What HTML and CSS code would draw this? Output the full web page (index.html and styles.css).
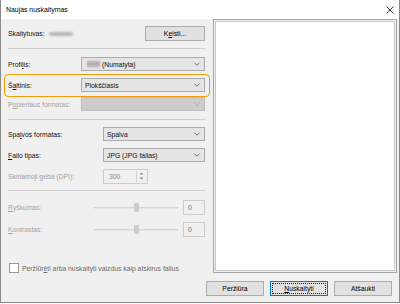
FILE: index.html
```
<!DOCTYPE html>
<html lang="lt">
<head>
<meta charset="utf-8">
<link rel="stylesheet" href="styles.css">
</head>
<body>
<div class="window">
  <div class="titlebar">
    <span class="title">Naujas nuskaitymas</span>
    <svg class="close" width="8" height="8" viewBox="0 0 8 8"><path d="M0.5 0.5 L7.5 7.5 M7.5 0.5 L0.5 7.5" stroke="#222" stroke-width="0.9" fill="none"/></svg>
  </div>
  <div class="main">
    <div class="left">
      <div class="row r-scanner">
        <span class="label">Skaitytuvas:</span>
        <span class="blur-name"></span>
        <button class="btn btn-change">K<u>e</u>isti...</button>
      </div>
      <div class="sep s1"></div>
      <div class="row r-profile">
        <span class="label">Profi<u>l</u>is:</span>
        <div class="select wide"><span class="blur-icon"></span><span>(Numatyta)</span><svg class="chev" width="6" height="4" viewBox="0 0 6 4"><path d="M0.5 0.8 L3 3.2 L5.5 0.8" stroke="#555" stroke-width="0.8" fill="none"/></svg></div>
      </div>
      <div class="row r-source">
        <div class="highlight"></div>
        <span class="label">Š<u>a</u>ltinis:</span>
        <div class="select wide"><span>Plokščiasis</span><svg class="chev" width="6" height="4" viewBox="0 0 6 4"><path d="M0.5 0.8 L3 3.2 L5.5 0.8" stroke="#555" stroke-width="0.8" fill="none"/></svg></div>
      </div>
      <div class="row r-paper">
        <span class="label disabled">P<u>o</u>pieriaus formatas:</span>
        <div class="select wide off"><span></span><svg class="chev" width="6" height="4" viewBox="0 0 6 4"><path d="M0.5 0.8 L3 3.2 L5.5 0.8" stroke="#aaa" stroke-width="0.8" fill="none"/></svg></div>
      </div>
      <div class="sep s2"></div>
      <div class="row r-color">
        <span class="label">Spa<u>l</u>vos formatas:</span>
        <div class="select narrow"><span>Spalva</span><svg class="chev" width="6" height="4" viewBox="0 0 6 4"><path d="M0.5 0.8 L3 3.2 L5.5 0.8" stroke="#555" stroke-width="0.8" fill="none"/></svg></div>
      </div>
      <div class="row r-type">
        <span class="label"><u>F</u>ailo tipas:</span>
        <div class="select narrow"><span>JPG (JPG failas)</span><svg class="chev" width="6" height="4" viewBox="0 0 6 4"><path d="M0.5 0.8 L3 3.2 L5.5 0.8" stroke="#555" stroke-width="0.8" fill="none"/></svg></div>
      </div>
      <div class="row r-dpi">
        <span class="label disabled">Skiriamoji geba (DPI):</span>
        <div class="spin">
          <div class="spin-field">300</div>
          <div class="spin-btns">
            <svg width="5" height="3" viewBox="0 0 5 3"><path d="M0.5 2.5 L2.5 0.5 L4.5 2.5 Z" fill="#888"/></svg>
            <svg width="5" height="3" viewBox="0 0 5 3"><path d="M0.5 0.5 L2.5 2.5 L4.5 0.5 Z" fill="#888"/></svg>
          </div>
        </div>
      </div>
      <div class="sep s3"></div>
      <div class="row r-bright">
        <span class="label disabled"><u>R</u>yškumas:</span>
        <div class="slider"><div class="track"></div><div class="thumb"></div></div>
        <div class="valbox">0</div>
      </div>
      <div class="row r-contrast">
        <span class="label disabled"><u>K</u>ontrastas:</span>
        <div class="slider"><div class="track"></div><div class="thumb"></div></div>
        <div class="valbox">0</div>
      </div>
      <div class="row r-check">
        <span class="checkbox"></span>
        <span class="check-label">Peržiūr<u>ė</u>ti arba nuskaityti vaizdus kaip atskirus failus</span>
      </div>
    </div>
    <div class="preview"><div class="preview-inner"></div></div>
  </div>
  <div class="footer">
    <button class="btn">Peržiūra</button>
    <button class="btn btn-default"><span class="focus"><u>N</u>uskaityti</span></button>
    <button class="btn">Atšaukti</button>
  </div>
</div>
</body>
</html>
```

FILE: styles.css
```
* { box-sizing: border-box; }
html, body { margin: 0; padding: 0; background: #ffffff; }
body {
  font-family: "Liberation Sans", Arial, sans-serif;
  font-size: 6.8px;
  color: #111;
}
u { text-decoration-thickness: 0.6px; text-underline-offset: 1px; }
.window {
  width: 400px;
  height: 303px;
  background: #f0f0f0;
  border: 1px solid #8a8a8a;
  border-top: none;
  display: flex;
  flex-direction: column;
}
.titlebar {
  height: 19px;
  background: #ffffff;
  display: flex;
  align-items: center;
  justify-content: space-between;
  padding: 0 4px 0 5px;
  flex: none;
}
.title { font-size: 6.9px; color: #000; }
.close { margin-right: 1px; }
.main {
  display: flex;
  height: 254px;
  flex: none;
}
.left {
  width: 212px;
  padding: 7px 8px 0 7px;
  display: flex;
  flex-direction: column;
}
.row {
  display: flex;
  align-items: center;
  height: 14px;
  flex: none;
  position: relative;
}
.label { flex: none; white-space: nowrap; }
.disabled { color: #a3a3a3; }
.r-scanner { height: 15px; }
.blur-name {
  width: 24px;
  height: 4px;
  margin-left: 4px;
  background: #b9b4bb;
  filter: blur(1px);
  border-radius: 2px;
}
.btn {
  font: inherit;
  color: #000;
  background: #e1e1e1;
  border: 1px solid #adadad;
  padding: 0;
  height: 15px;
  display: flex;
  align-items: center;
  justify-content: center;
}
.btn-change { width: 60px; margin-left: auto; }
.sep { height: 1px; background: #cfcfcf; flex: none; }
.s1 { margin-top: 7px; }
.s2 { margin-top: 8px; }
.s3 { margin-top: 7px; }
.r-profile { margin-top: 8px; }
.r-source { margin-top: 7px; }
.r-paper { margin-top: 5px; }
.r-color { margin-top: 7px; }
.r-type { margin-top: 7px; }
.r-dpi { margin-top: 7px; }
.r-bright { margin-top: 9px; height: 15px; }
.r-contrast { margin-top: 7px; height: 15px; }
.r-check { margin-top: 26px; height: 10px; }
.select {
  margin-left: auto;
  height: 14px;
  background: #e5e5e5;
  border: 1px solid #acacac;
  display: flex;
  align-items: center;
  padding: 0 4px 0 3px;
  gap: 2px;
}
.select .chev { margin-left: auto; }
.select.wide { width: 124px; }
.select.narrow { width: 102px; }
.select.off { background: #cccccc; border-color: #bfbfbf; }
.blur-icon {
  width: 13px;
  height: 6px;
  background: #b9a9b4;
  filter: blur(0.8px);
  margin-left: 2px;
}
.highlight {
  position: absolute;
  left: -4px;
  right: -5px;
  top: -4px;
  bottom: -5px;
  border: 1.6px solid #f29d0c;
  border-radius: 4px;
  pointer-events: none;
}
.spin {
  display: flex;
  height: 15px;
  width: 45px;
  border: 1px solid #cccccc;
  background: #f0f0f0;
}
.r-dpi .spin { margin-left: auto; margin-right: 57px; }
.spin-field {
  flex: 1;
  color: #8d8d8d;
  padding-left: 5px;
  display: flex;
  align-items: center;
}
.spin-btns {
  width: 10px;
  border-left: 1px solid #d4d4d4;
  display: flex;
  flex-direction: column;
  align-items: center;
  justify-content: space-evenly;
  margin: 1px;
}
.slider {
  margin-left: auto;
  width: 84px;
  height: 15px;
  position: relative;
  display: flex;
  align-items: center;
}
.track {
  width: 100%;
  height: 2px;
  background: #e7e7e7;
  border-top: 1px solid #d6d6d6;
}
.thumb {
  position: absolute;
  left: 40px;
  top: 3px;
  width: 5px;
  height: 9px;
  background: #cccccc;
  border-radius: 1px 1px 2px 2px;
}
.valbox {
  width: 22px;
  height: 15px;
  margin-left: 5px;
  border: 1px solid #cccccc;
  background: #f0f0f0;
  color: #6d6d6d;
  display: flex;
  align-items: center;
  padding-left: 4px;
}
.checkbox {
  width: 10px;
  height: 10px;
  background: #fff;
  border: 1px solid #9a9a9a;
  flex: none;
  margin-left: 1px;
}
.check-label { margin-left: 3px; color: #6a6a6a; white-space: nowrap; }
.preview {
  width: 184px;
  border: 1px solid #a5a5a5;
  padding: 1px;
  background: #f0f0f0;
}
.preview-inner {
  width: 100%;
  height: 100%;
  background: #fff;
  border: 1px solid #c9c9c9;
}
.footer {
  display: flex;
  justify-content: flex-end;
  gap: 6px;
  padding: 8px 7px 0 0;
}
.footer .btn { width: 58px; height: 15px; }
.btn-default { border-color: #0078d7; }
.focus {
  display: flex;
  align-items: center;
  justify-content: center;
  width: 54px;
  height: 11px;
  border: 1px dotted #222;
}
```
